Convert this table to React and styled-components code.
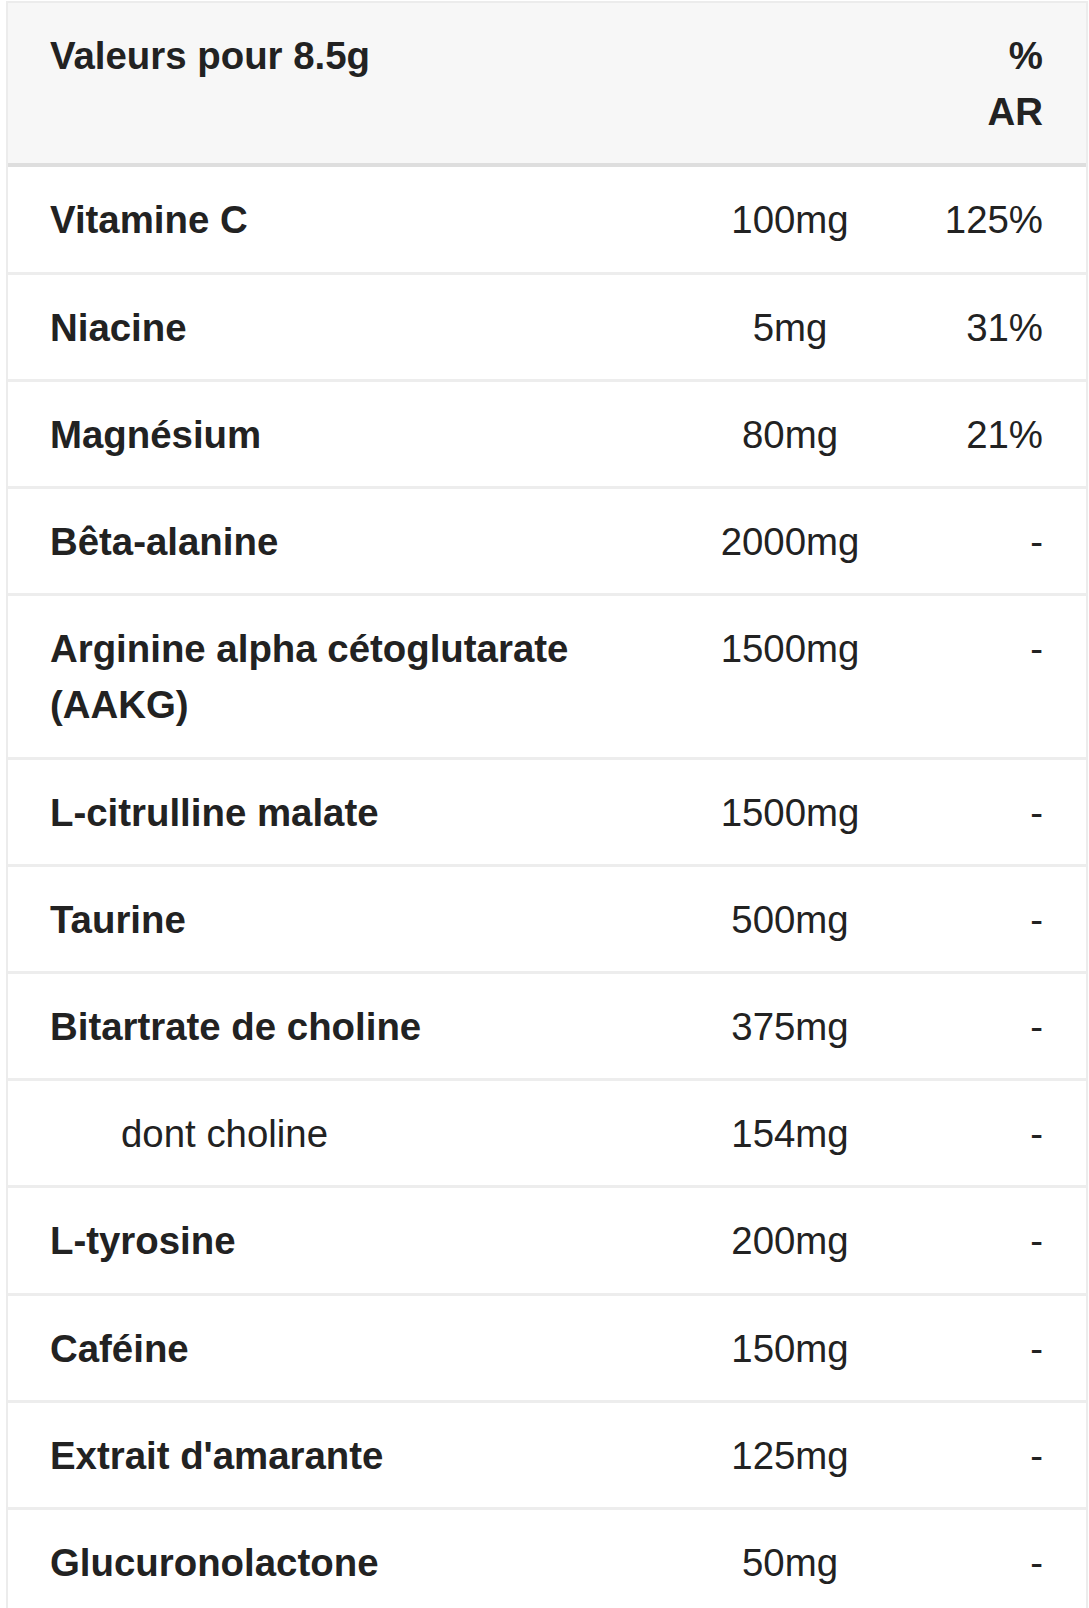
import React from "react";
import styled, { createGlobalStyle } from "styled-components";

const GlobalStyle = createGlobalStyle`
  html, body {
    margin: 0;
    padding: 0;
    background: #fff;
  }
  body {
    font-family: "Liberation Sans", Arial, Helvetica, sans-serif;
    color: #222;
  }
`;

const Table = styled.div`
  width: 1082px;
  margin: 1px 0 0 6px;
  border: 2px solid #ececec;
  border-bottom: none;
  box-sizing: border-box;
  font-size: 38.4px;
  line-height: 56.2px;
`;

const Row = styled.div`
  display: grid;
  grid-template-columns: 1fr 236px 178px;
  align-items: start;
  background: ${(p) => (p.$head ? "#f7f7f7" : "#fff")};
  border-bottom: ${(p) => (p.$head ? "4px solid #dedede" : "3px solid #ededed")};
`;

const Cell = styled.div`
  padding: 25px 43px 23px ${(p) => (p.$indent ? 113 : 42)}px;
  text-align: left;
  font-weight: ${(p) => (p.$bold ? 700 : 400)};
  white-space: ${(p) => (p.$wrap ? "normal" : "nowrap")};
`;

const ValueCell = styled(Cell)`
  padding-left: 40px;
  padding-right: 40px;
  text-align: center;
`;

const PercentCell = styled(Cell)`
  padding-left: 0;
  text-align: right;
`;

const rows = [
  ["Vitamine C", "100mg", "125%"],
  ["Niacine", "5mg", "31%"],
  ["Magnésium", "80mg", "21%"],
  ["Bêta-alanine", "2000mg", "-"],
  ["Arginine alpha cétoglutarate (AAKG)", "1500mg", "-"],
  ["L-citrulline malate", "1500mg", "-"],
  ["Taurine", "500mg", "-"],
  ["Bitartrate de choline", "375mg", "-"],
  ["dont choline", "154mg", "-", true],
  ["L-tyrosine", "200mg", "-"],
  ["Caféine", "150mg", "-"],
  ["Extrait d'amarante", "125mg", "-"],
  ["Glucuronolactone", "50mg", "-"],
];

export default function App() {
  return (
    <>
      <GlobalStyle />
      <Table>
        <Row $head>
          <Cell $bold>Valeurs pour 8.5g</Cell>
          <ValueCell />
          <PercentCell $bold>
            %
            <br />
            AR
          </PercentCell>
        </Row>
        {rows.map(([name, amount, ar, sub]) => (
          <Row key={name}>
            <Cell $bold={!sub} $indent={sub} $wrap>
              {name}
            </Cell>
            <ValueCell>{amount}</ValueCell>
            <PercentCell>{ar}</PercentCell>
          </Row>
        ))}
      </Table>
    </>
  );
}
